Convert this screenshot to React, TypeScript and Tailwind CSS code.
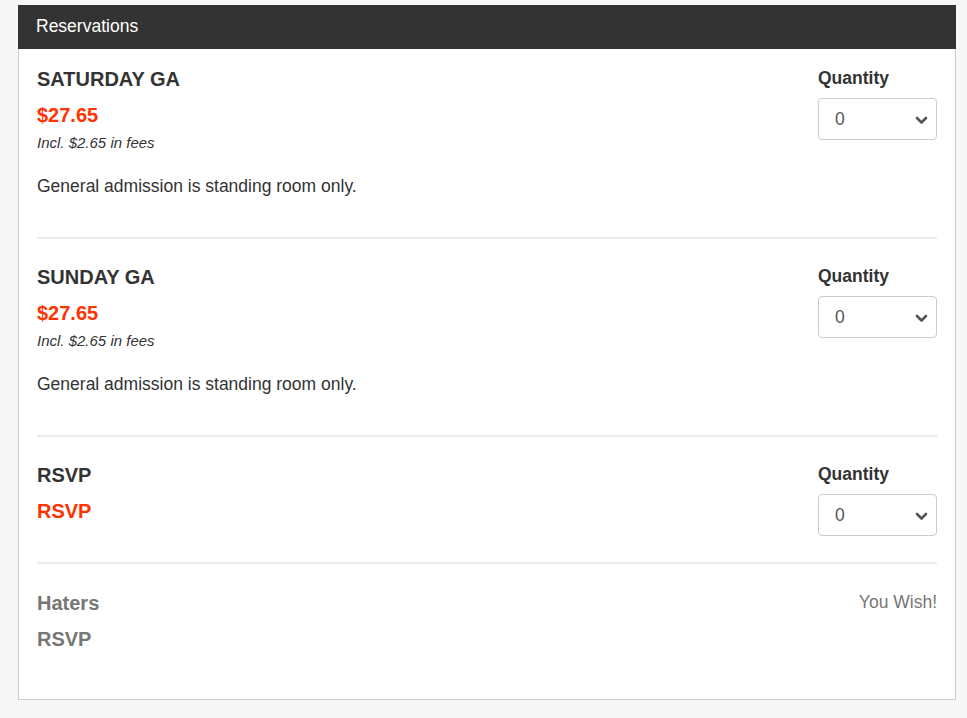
const font = { fontFamily: '"Liberation Sans", Arial, sans-serif' };

type Ticket = {
  name: string;
  price: string;
  fees?: string;
  desc?: string;
  soldOut?: string;
};

const tickets: Ticket[] = [
  { name: "SATURDAY GA", price: "$27.65", fees: "Incl. $2.65 in fees", desc: "General admission is standing room only." },
  { name: "SUNDAY GA", price: "$27.65", fees: "Incl. $2.65 in fees", desc: "General admission is standing room only." },
  { name: "RSVP", price: "RSVP" },
  { name: "Haters", price: "RSVP", soldOut: "You Wish!" },
];

function QtySelect() {
  return (
    <div className="relative mt-[10px] h-[42px] w-[119px] rounded-[4px] border border-[#cccccc] bg-white">
      <span className="absolute left-[16px] top-[9px] text-[17.5px] leading-[22px] text-[#555555]">0</span>
      <svg className="absolute right-[8px] top-[17px]" width="13" height="9" viewBox="0 0 13 9">
        <path d="M2 2 L6.5 6.5 L11 2" fill="none" stroke="#555555" strokeWidth="2.6" strokeLinecap="round" strokeLinejoin="round" />
      </svg>
    </div>
  );
}

function TicketRow({ t, first, last }: { t: Ticket; first: boolean; last: boolean }) {
  const muted = !!t.soldOut;
  const pad = first ? "pt-[19px]" : last ? "pt-[28px]" : "pt-[27px]";
  return (
    <div className={last ? `${pad} pb-[49px]` : `${pad} border-b-2 border-[#ebebeb] pb-[26px]`}>
      <div className="flex justify-between">
        <div>
          <div className={`text-[20px] font-bold leading-[22px] ${muted ? "text-[#777777]" : "text-[#333333]"}`}>{t.name}</div>
          <div className={`mt-[14px] text-[20px] font-bold leading-[22px] ${muted ? "text-[#777777]" : "text-[#ff3300]"}`}>{t.price}</div>
          {t.fees && <div className="mt-[7px] text-[15px] italic leading-[20px] text-[#333333]">{t.fees}</div>}
          {t.desc && <p className="mt-[21px] mb-[13px] text-[17.5px] leading-[24px] text-[#333333]">{t.desc}</p>}
        </div>
        {t.soldOut ? (
          <div className="text-[17.5px] leading-[20px] text-[#777777]">{t.soldOut}</div>
        ) : (
          <div>
            <div className="text-[17.5px] font-bold leading-[20px] text-[#333333]">Quantity</div>
            <QtySelect />
          </div>
        )}
      </div>
    </div>
  );
}

export default function App() {
  return (
    <div className="min-h-[718px] bg-[#f7f7f7] pt-[5px] pl-[18px] pr-[10px]" style={font}>
      <div className="w-[938px] border border-t-0 border-[#cccccc] bg-white">
        <div className="-mx-px h-[44px] bg-[#333333] px-[18px] text-[17.5px] leading-[42px] text-white">Reservations</div>
        <div className="px-[18px]">
          {tickets.map((t, i) => (
            <TicketRow key={i} t={t} first={i === 0} last={i === tickets.length - 1} />
          ))}
        </div>
      </div>
    </div>
  );
}
